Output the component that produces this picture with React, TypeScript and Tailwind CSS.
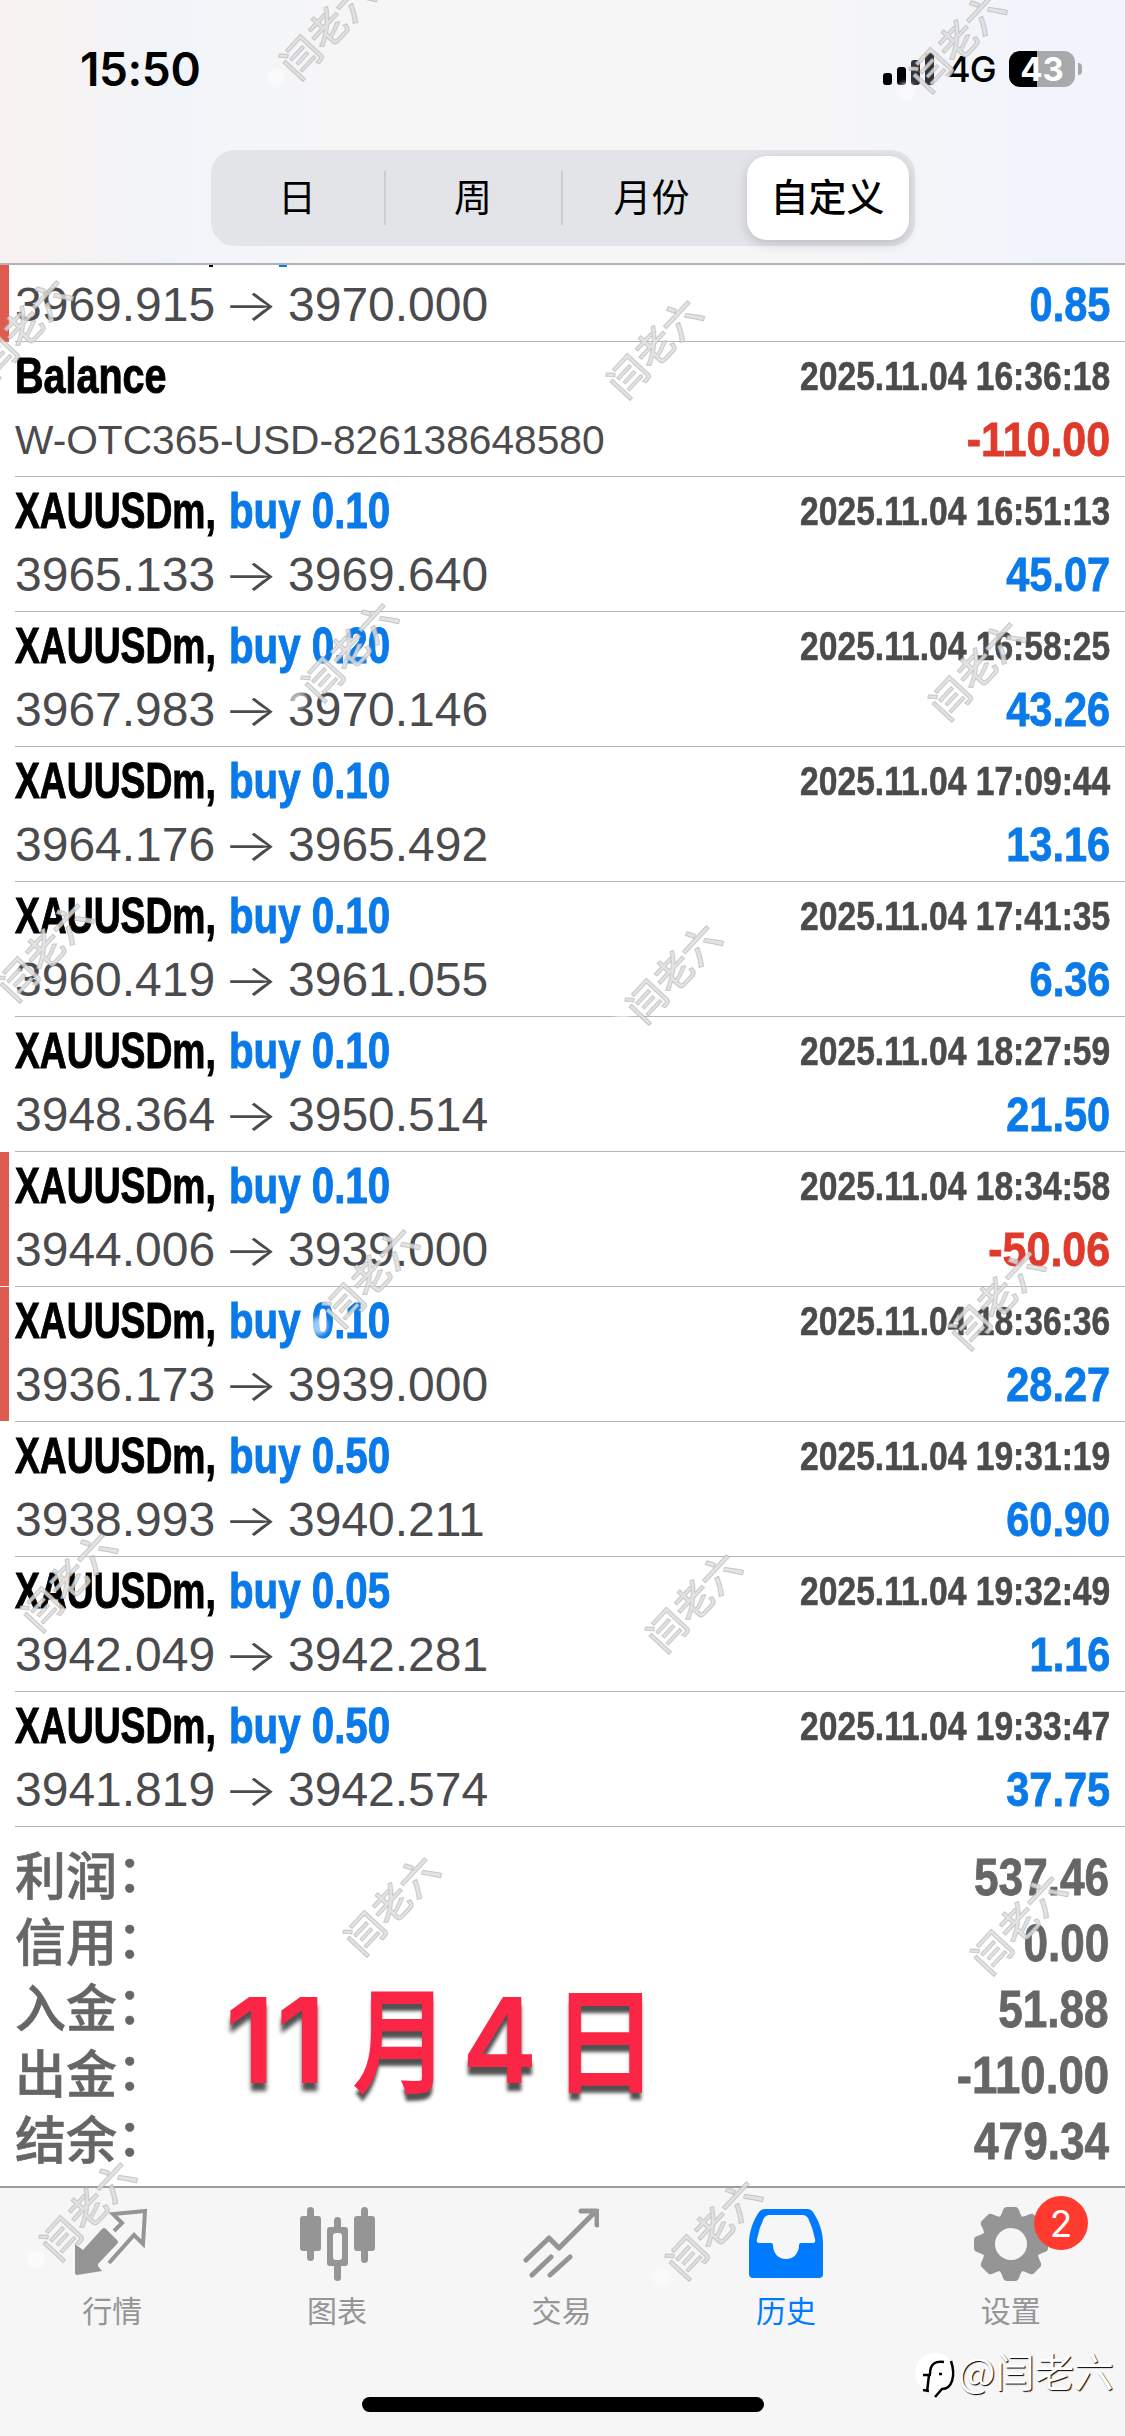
import type { ReactNode } from 'react'

type Deal = {
  lots?: string
  comment?: string
  open?: string
  close?: string
  time: string
  profit: string
  marked?: boolean
}

const deals: Deal[] = [
  { comment: 'W-OTC365-USD-826138648580', time: '2025.11.04 16:36:18', profit: '-110.00' },
  { lots: '0.10', open: '3965.133', close: '3969.640', time: '2025.11.04 16:51:13', profit: '45.07' },
  { lots: '0.20', open: '3967.983', close: '3970.146', time: '2025.11.04 16:58:25', profit: '43.26' },
  { lots: '0.10', open: '3964.176', close: '3965.492', time: '2025.11.04 17:09:44', profit: '13.16' },
  { lots: '0.10', open: '3960.419', close: '3961.055', time: '2025.11.04 17:41:35', profit: '6.36' },
  { lots: '0.10', open: '3948.364', close: '3950.514', time: '2025.11.04 18:27:59', profit: '21.50' },
  { lots: '0.10', open: '3944.006', close: '3939.000', time: '2025.11.04 18:34:58', profit: '-50.06', marked: true },
  { lots: '0.10', open: '3936.173', close: '3939.000', time: '2025.11.04 18:36:36', profit: '28.27', marked: true },
  { lots: '0.50', open: '3938.993', close: '3940.211', time: '2025.11.04 19:31:19', profit: '60.90' },
  { lots: '0.05', open: '3942.049', close: '3942.281', time: '2025.11.04 19:32:49', profit: '1.16' },
  { lots: '0.50', open: '3941.819', close: '3942.574', time: '2025.11.04 19:33:47', profit: '37.75' },
]

const totals = [
  ['利润', '537.46'],
  ['信用', '0.00'],
  ['入金', '51.88'],
  ['出金', '-110.00'],
  ['结余', '479.34'],
]

const watermarks = [
  [326, 27], [956, 40], [22, 326], [653, 346],
  [348, 649], [975, 668], [43, 949], [672, 971],
  [369, 1275], [995, 1297], [67, 1579], [692, 1600],
  [390, 1903], [1017, 1922], [86, 2208], [712, 2227],
]

function StatusBar() {
  return (
    <div className="flex h-[138px] items-center justify-between pl-[80px] pr-[43px] font-['Inter',sans-serif]">
      <div className="text-[46px] font-semibold leading-none tracking-[-0.4px] text-black">15:50</div>
      <div className="flex items-center">
        <div className="flex h-[32px] items-end gap-[5px]">
          <div className="h-[12px] w-[9px] rounded-[3px] bg-black" />
          <div className="h-[18px] w-[9px] rounded-[3px] bg-black" />
          <div className="h-[25px] w-[9px] rounded-[3px] bg-[#333]" />
          <div className="h-[32px] w-[9px] rounded-[3px] bg-[#333]" />
        </div>
        <div className="ml-[13px] w-[48px] text-[36px] font-medium leading-none tracking-[-1px] text-black">4G</div>
        <div className="ml-[14px] flex h-[36px] w-[66px] items-center justify-center rounded-[11px] bg-[linear-gradient(90deg,#000_28px,#a7a9ac_28px)] text-[33px] font-bold leading-none text-white">
          43
        </div>
        <div className="ml-[3px] h-[12px] w-[4px] rounded-r-full bg-[#a7a9ac]" />
      </div>
    </div>
  )
}

function PeriodTabs() {
  return (
    <div className="mx-auto mt-[12px] flex h-[96px] w-[704px] items-center rounded-[24px] bg-[#e3e4e8] text-[38px] text-black">
      <div className="flex h-[54px] w-[175px] items-center justify-center border-r-2 border-[#cccdd1]">日</div>
      <div className="flex h-[54px] w-[177px] items-center justify-center border-r-2 border-[#cccdd1]">周</div>
      <div className="flex h-[54px] w-[184px] items-center justify-center pr-[6px]">月份</div>
      <div className="flex h-[84px] w-[162px] items-center justify-center rounded-[20px] bg-white font-medium shadow-[0_4px_12px_rgba(0,0,0,0.16)]">
        自定义
      </div>
    </div>
  )
}

function Prices({ open, close }: { open: string; close: string }) {
  return (
    <div className="flex items-baseline text-[48px] text-[#4b4b4d]">
      <span className="w-[208px]">{open}</span>
      <span className="w-[65px] origin-left scale-x-[1.32] font-['Inter'] text-[44px] font-light">→</span>
      <span>{close}</span>
    </div>
  )
}

function Profit({ value }: { value: string }) {
  return (
    <div
      className={`origin-right text-[48px] font-bold [-webkit-text-stroke:0.8px_currentColor] ${value.startsWith('-') ? 'scale-x-[0.895] text-[#e03a2b]' : 'scale-x-[0.865] text-[#0a7aea]'}`}
    >
      {value}
    </div>
  )
}

function DealRow({ deal }: { deal: Deal }) {
  return (
    <div className="flex h-[135px]">
      <div className={`h-[134px] w-[9px] ${deal.marked ? 'bg-[#de5b50]' : ''}`} />
      <div className="ml-[6px] flex flex-1 flex-col border-b border-[#b4b6b8] pr-[15px] pt-[3px] leading-[62px]">
        <div className="flex h-[64px] justify-between">
          {deal.lots ? (
            <div className="flex text-[50px] font-bold [-webkit-text-stroke:1px_currentColor]">
              <span className="w-[214px] origin-left scale-x-[0.745] text-black">XAUUSDm,</span>
              <span className="origin-left scale-x-[0.805] whitespace-nowrap text-[#0a7aea]">buy {deal.lots}</span>
            </div>
          ) : (
            <div className="origin-left scale-x-[0.79] text-[50px] font-bold text-black [-webkit-text-stroke:1px_currentColor]">
              Balance
            </div>
          )}
          <div className="origin-right scale-x-[0.84] text-[40px] font-bold text-[#4b4b4d] [-webkit-text-stroke:0.6px_currentColor]">
            {deal.time}
          </div>
        </div>
        <div className="flex h-[64px] justify-between">
          {deal.comment ? (
            <div className="text-[40.7px] text-[#4b4b4d]">{deal.comment}</div>
          ) : (
            <Prices open={deal.open!} close={deal.close!} />
          )}
          <Profit value={deal.profit} />
        </div>
      </div>
    </div>
  )
}

function TabItem({ label, active, children }: { label: string; active?: boolean; children: ReactNode }) {
  return (
    <div className={`flex flex-1 flex-col items-center pt-[18px] ${active ? 'text-[#007aff]' : 'text-[#959595]'}`}>
      <svg width="76" height="76" viewBox="0 0 76 76" fill="none">
        {children}
      </svg>
      <div className="mt-[8px] text-[30px] leading-[44px]">{label}</div>
    </div>
  )
}

function Gear() {
  return (
    <g fill="currentColor">
      {[0, 45, 90, 135, 180, 225, 270, 315].map((a) => (
        <path key={a} transform={`rotate(${a} 38 38)`} d="M24 14 Q28 11 30 4Q31 1 34 1H42Q45 1 46 4Q48 11 52 14Z" />
      ))}
      <path fillRule="evenodd" d="M38 9a29 29 0 1 0 0 58a29 29 0 1 0 0-58ZM38 22a16 16 0 1 1 0 32a16 16 0 1 1 0-32Z" />
    </g>
  )
}

function TabBar() {
  return (
    <div className="flex h-[250px] flex-col items-center border-t-2 border-[#9d9d9f] bg-[#f6f6f6]">
      <div className="flex w-full pr-[2px]">
        <TabItem label="行情">
          <path fill="currentColor" d="M1 38 9 44 28 23Q30 21 32 23L43 34Q45 36 43 38L24 58V60L28 65 3 69Q1 69 1 67Z" />
          <path stroke="currentColor" strokeWidth="4" d="M40 25 48 17 39 8 71 5 69 38 60 29 35 57" />
        </TabItem>
        <TabItem label="图表">
          <g fill="currentColor">
            <rect x="1" y="10" width="21" height="35" rx="3" />
            <rect x="8" y="1" width="7" height="54" rx="3.5" />
            <rect x="55" y="10" width="21" height="35" rx="3" />
            <rect x="62" y="1" width="7" height="56" rx="3.5" />
            <rect x="35" y="11" width="7" height="14" rx="3.5" />
            <rect x="35" y="55" width="7" height="20" rx="3.5" />
            <path fillRule="evenodd" d="M31 21H46Q49 21 49 24V57Q49 60 46 60H31Q28 60 28 57V24Q28 21 31 21ZM37 27Q34 27 34 30V51Q34 54 37 54H40Q43 54 43 51V30Q43 27 40 27Z" />
          </g>
        </TabItem>
        <TabItem label="交易">
          <path stroke="currentColor" strokeWidth="5" strokeLinecap="round" strokeLinejoin="round" d="M3 54 26 32 36 42 72 6M58 5H74V19M9 69 28 51M27 69 47 51" />
        </TabItem>
        <TabItem label="历史" active>
          <path
            fill="currentColor"
            fillRule="evenodd"
            d="M17 3H59Q63 3 65 6C71 15 75 26 75 37V68Q75 72 71 72H5Q1 72 1 68V37C1 26 5 15 11 6Q13 3 17 3ZM21 9Q18 9 16 12Q11 22 9 33Q8 37 11 37H23Q25 37 25 39C25 47 30 53 38 53S51 47 51 39Q51 37 53 37H65Q68 37 67 33Q65 22 60 12Q58 9 55 9Z"
          />
        </TabItem>
        <TabItem label="设置">
          <Gear />
        </TabItem>
      </div>
      <div className="mt-[63px] h-[15px] w-[402px] rounded-full bg-black" />
    </div>
  )
}

export default function App() {
  return (
    <div className="relative flex h-[2436px] w-[1125px] flex-col overflow-hidden bg-white font-['Liberation_Sans','Noto_Sans_CJK_SC',sans-serif]">
      <div className="h-[265px] shrink-0 border-b-2 border-[#b4b4b6] bg-[linear-gradient(90deg,#f7f2f0_0px,#f5f3f4_90px,#f1f4f9_170px,#f6f6f7_330px,#f6f6f7_820px,#f1f4fb_1040px,#f3f4fb_1125px)]">
        <StatusBar />
        <PeriodTabs />
      </div>

      <div className="flex h-[77px] shrink-0">
        <div className="w-[9px] bg-[#de5b50]" />
        <div className="relative ml-[6px] flex flex-1 justify-between overflow-hidden border-b border-[#b4b6b8] pr-[15px] pt-[9px] leading-[62px]">
          <Prices open="3969.915" close="3970.000" />
          <Profit value="0.85" />
          {/* descenders of the scrolled-out title line */}
          <div className="absolute left-[194px] top-0 h-[2px] w-[4px] bg-black" />
          <div className="absolute left-[264px] top-0 h-[2px] w-[8px] bg-[#0a7aea]" />
        </div>
      </div>
      {deals.map((deal) => (
        <DealRow key={deal.time} deal={deal} />
      ))}

      <div className="flex-1 pl-[15px] pr-[16px] pt-[18px]">
        {totals.map(([label, value]) => (
          <div key={label} className="flex h-[66px] items-center justify-between text-[51px] leading-[66px] text-[#666]">
            <div className="flex font-medium [-webkit-text-stroke:0.6px_currentColor]">
              {label}
              <span className="-mt-[3px]">：</span>
            </div>
            <div
              className={`origin-right font-bold [-webkit-text-stroke:0.8px_currentColor] ${value.startsWith('-') ? 'scale-x-[0.895]' : 'scale-x-[0.865]'}`}
            >
              {value}
            </div>
          </div>
        ))}
      </div>

      <TabBar />

      {/* unread badge over the settings tab */}
      <div className="absolute left-[1034px] top-[2196px] flex size-[54px] items-center justify-center rounded-full bg-[#ff3b30] font-['Inter'] text-[37px] leading-none text-white">
        2
      </div>

      {/* date note */}
      <div className="absolute left-[225px] top-[1954px] flex items-baseline whitespace-nowrap font-['Inter','Noto_Sans_CJK_SC'] text-[118px] font-semibold leading-[160px] text-[#fb2545] [text-shadow:0_8px_4px_rgba(50,50,50,0.85)]">
        <span className="w-[128px] tracking-[1px]">11</span>
        <span className="w-[109px] origin-left scale-x-[0.84] font-['Noto_Sans_CJK_SC'] text-[114px] font-medium [-webkit-text-stroke:2px_currentColor]">月</span>
        <span className="w-[90px] origin-left scale-x-[0.96]">4</span>
        <span className="origin-left scale-x-[0.93] font-['Noto_Sans_CJK_SC'] text-[114px] font-medium [-webkit-text-stroke:2px_currentColor]">日</span>
      </div>

      {watermarks.map(([x, y]) => (
        <div key={`${x}-${y}`} className="absolute size-0" style={{ left: x, top: y }}>
          <div className="absolute -left-[59px] top-[42px] size-[18px] rounded-full bg-white/60 blur-[2px]" />
          <div className="absolute -left-[60px] -top-[24px] w-[120px] rotate-[-47deg] text-center font-['Noto_Sans_CJK_SC'] text-[39px] font-medium leading-[48px] text-[#dedede]/85 [-webkit-text-stroke:1px_rgba(175,175,175,0.6)]">
            闫老六
          </div>
        </div>
      ))}

      {/* signature */}
      <div className="absolute left-[914px] top-[2346px] flex items-center">
        <svg width="44" height="54" viewBox="0 0 44 54" fill="none">
          <circle cx="21" cy="27" r="20" fill="white" />
          <path stroke="black" strokeWidth="2.5" d="M13 46 15 29M9 29H17M16 28C16 17 22 15 30 16M25 28h3M37 15C42 30 38 43 28 43L21 51M9 44l6 1" />
        </svg>
        <div className="-mt-[7px] font-['Noto_Sans_CJK_SC'] text-[39.5px] leading-[54px] text-white [text-shadow:1px_1px_1px_#000]">@闫老六</div>
      </div>
    </div>
  )
}
